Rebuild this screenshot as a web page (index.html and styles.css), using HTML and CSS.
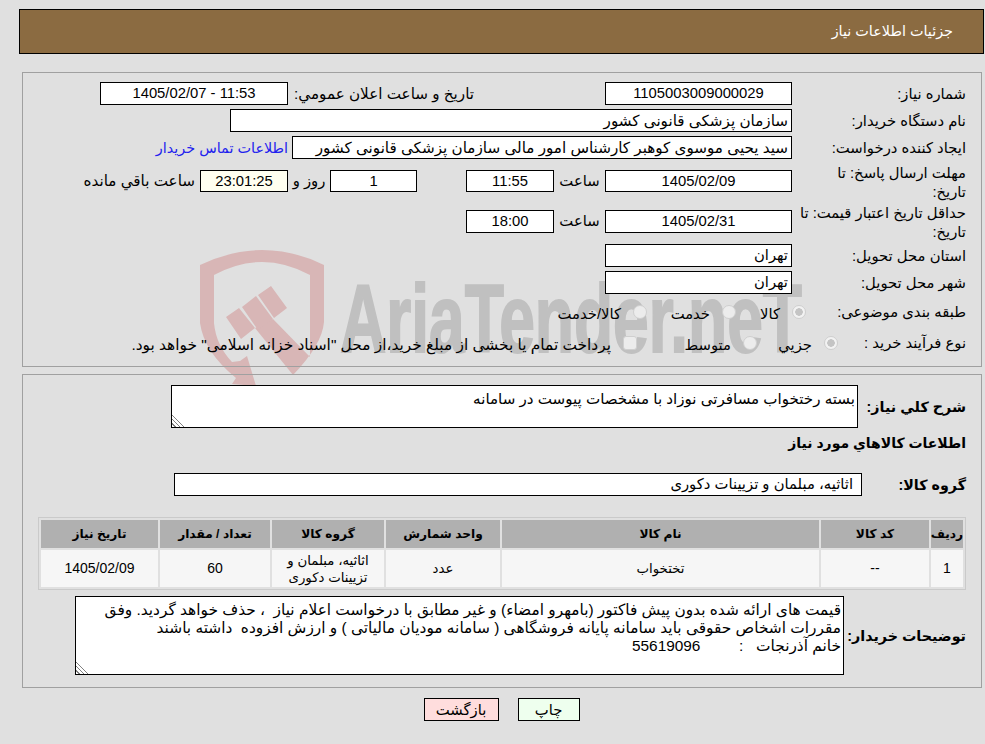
FILE: index.html
```html
<!DOCTYPE html>
<html lang="fa" dir="rtl">
<head>
<meta charset="utf-8">
<title>جزئیات اطلاعات نیاز</title>
<link rel="stylesheet" href="styles.css">
</head>
<body>
<svg class="watermark" width="985" height="744" viewBox="0 0 985 744" aria-hidden="true">
  <path class="wm-red" d="M200 265 Q232 250 262 250 Q294 250 324 265 L324 322 Q322 345 293 375 L255 328 L273 319 L310 357 Q310 340 310 323 L310 275 Q286 262 262 262 Q238 262 214 275 L214 323 Q216 345 232 362 L240 361 L247 356 L256 386 L232 384 L236 378 Q204 352 200 323 Z"/>
  <path class="wm-red" d="M226 317 L239 308 L255 328 L241 339 Z M242 307 L256 296 L273 319 L258 330 Z M258 295 L271 286 L287 308 L274 318 Z"/>
  <text class="wm-text" x="340" y="352" textLength="462" lengthAdjust="spacingAndGlyphs" direction="ltr">AriaTender.neT</text>
</svg>
<div class="page">
  <header class="title-bar">جزئیات اطلاعات نیاز</header>

  <section class="panel panel-info">
    <div class="row">
      <div class="label">شماره نیاز:</div>
      <div class="field w-187 center">1105003009000029</div>
      <div class="label-public wide">تاریخ و ساعت اعلان عمومي:</div>
      <div class="field w-188 center">11:53 - 1405/02/07</div>
    </div>
    <div class="row">
      <div class="label">نام دستگاه خریدار:</div>
      <div class="field w-562 wide">سازمان پزشکی قانونی کشور</div>
    </div>
    <div class="row">
      <div class="label">ایجاد کننده درخواست:</div>
      <div class="field w-500 wide">سید یحیی موسوی کوهبر کارشناس امور مالی سازمان پزشکی قانونی کشور</div>
      <a class="contact" href="#">اطلاعات تماس خریدار</a>
    </div>
    <div class="row row-deadline">
      <div class="label label-2">مهلت ارسال پاسخ: تا<br>تاریخ:</div>
      <div class="field w-187 short center">1405/02/09</div>
      <div class="hour">ساعت</div>
      <div class="field w-88 short center">11:55</div>
      <div class="spacer-49"></div>
      <div class="field w-87 short center">1</div>
      <div class="days">روز و</div>
      <div class="field w-88 short center timer">23:01:25</div>
      <div class="remain wide">ساعت باقي مانده</div>
    </div>
    <div class="row row-validity">
      <div class="label label-2">حداقل تاریخ اعتبار قیمت: تا<br>تاریخ:</div>
      <div class="field w-187 center">1405/02/31</div>
      <div class="hour">ساعت</div>
      <div class="field w-88 center">18:00</div>
    </div>
    <div class="row">
      <div class="label">استان محل تحویل:</div>
      <div class="field w-187">تهران</div>
    </div>
    <div class="row">
      <div class="label">شهر محل تحویل:</div>
      <div class="field w-187">تهران</div>
    </div>
    <div class="row row-subject">
      <div class="label label-subject">طبقه بندی موضوعی:</div>
      <label class="opt opt-70"><input class="radio" type="radio" name="subject" checked disabled><span>کالا</span></label>
      <label class="opt opt-89"><input class="radio" type="radio" name="subject" disabled><span>خدمت</span></label>
      <label class="opt"><input class="radio" type="radio" name="subject" disabled><span>کالا/خدمت</span></label>
    </div>
    <div class="row row-process">
      <div class="label label-process">نوع فرآیند خرید :</div>
      <label class="opt opt-81"><input class="radio" type="radio" name="process" checked disabled><span>جزیي</span></label>
      <label class="opt opt-120"><input class="radio" type="radio" name="process" disabled><span>متوسط</span></label>
      <label class="opt"><input class="check" type="checkbox" disabled><span class="long">پرداخت تمام یا بخشی از مبلغ خرید،از محل "اسناد خزانه اسلامی" خواهد بود.</span></label>
    </div>
  </section>

  <section class="panel panel-goods">
    <div class="row">
      <div class="label-strong w-108">شرح کلي نیاز:</div>
      <textarea class="area area-desc" readonly>بسته رختخواب مسافرتی نوزاد با مشخصات پیوست در سامانه</textarea>
    </div>
    <h2 class="heading">اطلاعات کالاهاي مورد نیاز</h2>
    <div class="row row-group">
      <div class="label-strong w-104">گروه کالا:</div>
      <div class="field w-688 pad-8">اثاثیه، مبلمان و تزیینات دکوری</div>
    </div>
    <table class="items">
      <thead>
        <tr>
          <th class="c-1">ردیف</th>
          <th class="c-2">کد کالا</th>
          <th class="c-3">نام کالا</th>
          <th class="c-4">واحد شمارش</th>
          <th class="c-5">گروه کالا</th>
          <th class="c-6">تعداد / مقدار</th>
          <th class="c-7">تاریخ نیاز</th>
        </tr>
      </thead>
      <tbody>
        <tr>
          <td class="num">1</td>
          <td class="num">--</td>
          <td>تختخواب</td>
          <td>عدد</td>
          <td>اثاثیه، مبلمان و تزیینات دکوری</td>
          <td class="num">60</td>
          <td class="num">1405/02/09</td>
        </tr>
      </tbody>
    </table>
    <div class="row row-notes">
      <div class="label-strong w-122">توضیحات خریدار:</div>
      <textarea class="area area-notes" readonly>قیمت های ارائه شده بدون پیش فاکتور (بامهرو امضاء) و غیر مطابق با درخواست اعلام نیاز  ، حذف خواهد گردید. وفق
مقررات اشخاص حقوقی باید سامانه پایانه فروشگاهی ( سامانه مودیان مالیاتی ) و ارزش افزوده  داشته باشند
خانم آذرنجات   :         55619096</textarea>
    </div>
  </section>

  <div class="actions">
    <button class="btn btn-print" type="button">چاپ</button>
    <button class="btn btn-back" type="button">بازگشت</button>
  </div>
</div>
</body>
</html>
```

FILE: styles.css
```css
* { box-sizing: border-box; }
html, body { margin: 0; padding: 0; }
body {
  background: #e0e0e0;
  color: #000;
  font-family: "Liberation Sans", "DejaVu Sans", sans-serif;
  font-size: 14.8px;
  line-height: 18px;
  height: 744px;
  overflow: hidden;
}
.watermark { position: absolute; left: 0; top: 0; z-index: -1; }
.wm-red { fill: #d8b6b6; }
.wm-text { fill: #c0c0c0; stroke: #c0c0c0; stroke-width: 2px; font-family: "Liberation Sans", sans-serif; font-weight: 700; font-size: 96px; }

.page { width: 965px; margin: 9px 1px 0 19px; }
.title-bar {
  height: 45px;
  padding-right: 30px;
  background: #8b6b41;
  border: 1px solid #000;
  color: #fff;
  line-height: 43px;
  font-size: 14.4px;
}
.panel { margin: 18px 2px 0 3px; border: 1px solid #a0a0a0; padding-right: 15px; }
.panel-info { padding-top: 9px; padding-bottom: 10px; height: 295px; }
.panel-goods { margin-top: 7px; padding-top: 10px; height: 314px; }

.row { display: flex; align-items: center; margin-top: 4px; }
.row:first-child { margin-top: 0; }
.row-deadline { margin-top: 3px; }
.row-validity { margin-top: 2px; }
.label { width: 174px; flex: none; }
.label-2 { line-height: 19px; margin: 2px 0 -2px; }
.label-public { width: 186px; margin-right: 131px; flex: none; }
.label-strong { flex: none; font-weight: 700; font-size: 14.3px; }
.w-108 { width: 108px; }
.w-104 { width: 104px; }
.w-122 { width: 122px; }
.wide { font-size: 15.2px; }

.field {
  flex: none;
  height: 23px;
  background: #fff;
  border: 1px solid #000;
  padding: 0 3px;
  line-height: 21px;
  white-space: nowrap;
  overflow: hidden;
}
.short { height: 22px; line-height: 20px; }
.center { text-align: center; }
.w-187 { width: 187px; }
.w-188 { width: 188px; }
.w-562 { width: 562px; }
.w-500 { width: 500px; }
.w-88 { width: 88px; }
.w-87 { width: 87px; }
.w-688 { width: 688px; }
.pad-8 { padding-right: 8px; }
.timer { background: #fffff0; }
.contact { margin-right: 4px; color: #2222ee; text-decoration: none; white-space: nowrap; font-size: 14.4px; }
.hour { width: 51px; flex: none; text-align: center; }
.spacer-49 { width: 49px; flex: none; }
.days { width: 42px; flex: none; text-align: center; }
.remain { margin-right: 5px; white-space: nowrap; }

.row-subject { height: 28px; }
.row-process { height: 26px; }
.label-subject { width: 160px; }
.label-process { width: 128px; }
.opt { display: flex; align-items: center; flex: none; white-space: nowrap; }
.opt span { margin-top: 3px; }
.opt .long { font-size: 15.4px; }
.opt-70 { width: 70px; }
.opt-89 { width: 89px; }
.opt-81 { width: 81px; }
.opt-120 { width: 120px; }
.radio, .check {
  appearance: none;
  flex: none;
  width: 14px;
  height: 14px;
  margin: 0 0 0 12px;
  border: 1px solid #cfcfcf;
  background: #ececec;
}
.radio { border-radius: 50%; }
.check { border-radius: 3px; }
.radio:checked { background: radial-gradient(circle, #c4c4c4 0 3.5px, #f2f2f2 4px); }

.area {
  flex: none;
  display: block;
  background: #fff;
  border: 1px solid #000;
  border-radius: 0;
  margin: 0;
  padding: 4px 2px 0;
  font: inherit;
  line-height: 18px;
  color: #000;
  overflow: hidden;
  outline: none;
}
.area::-webkit-resizer {
  background: linear-gradient(45deg, transparent 0 2px, #808080 2px 3px, transparent 3px 5px, #808080 5px 6px, transparent 6px 8px, #808080 8px 9px, transparent 9px);
}
.area-desc { width: 687px; height: 43px; font-size: 15.1px; }
.area-notes { width: 769px; height: 79px; white-space: pre; font-size: 15.4px; }

.heading { margin: 6px 0 0; font-size: 14px; font-weight: 700; line-height: 18px; }
.row-group { margin-top: 21px; }
.items {
  margin-top: 21px;
  width: 928px;
  table-layout: fixed;
  border-collapse: separate;
  border-spacing: 2px;
  border: 1px solid #cacaca;
  text-align: center;
}
.items th { height: 28px; padding: 0; background: #b0b0b0; font-size: 12.2px; font-weight: 700; }
.items td { height: 37px; padding: 0 6px; background: #f6f6f6; font-size: 13.3px; line-height: 17px; }
.items td.num { font-size: 14px; }
.c-1 { width: 32px; }
.c-2 { width: 108px; }
.c-3 { width: 317px; }
.c-4 { width: 114px; }
.c-5 { width: 112px; }
.c-6 { width: 110px; }
.c-7 { width: 117px; }
.row-notes { margin-top: 6px; }

.actions { display: flex; justify-content: center; gap: 19px; margin-top: 10px; }
.btn {
  height: 23px;
  border: 1px solid #000;
  border-radius: 0;
  padding: 0;
  font: inherit;
  color: #000;
}
.btn-print { width: 62px; background: #eeffee; }
.btn-back { width: 75px; background: #ffdddd; }
```
